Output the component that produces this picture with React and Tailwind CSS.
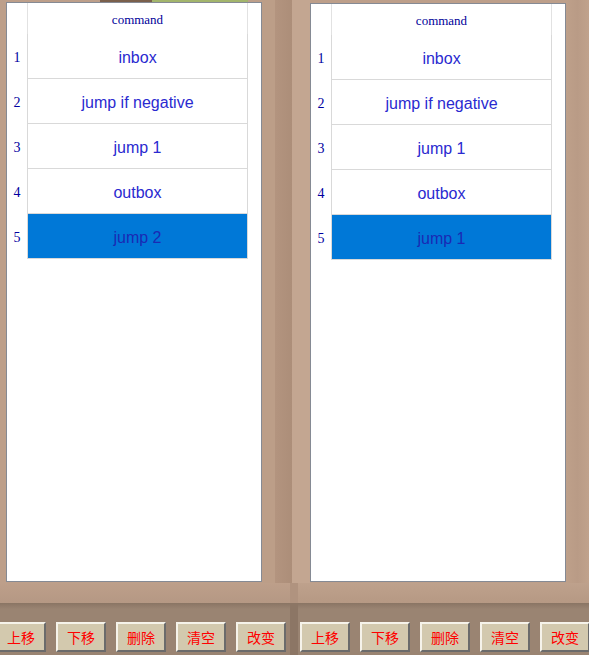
import React from 'react';

const left = ['inbox', 'jump if negative', 'jump 1', 'outbox', 'jump 2'];
const right = ['inbox', 'jump if negative', 'jump 1', 'outbox', 'jump 1'];
const buttons = ['上移', '下移', '删除', '清空', '改变'];

function Program({ rows, selected }) {
  return (
    <div className="w-[256px] h-full bg-white border border-[#858a94] flex flex-col">
      {/* header row */}
      <div className="flex h-[31px]">
        <div className="w-[20px]" />
        <div className="w-[221px] pt-[2px] border-l border-r border-[#e2e2e2] flex items-center justify-center font-['Liberation_Serif',serif] text-[13px] text-[#000099]">
          command
        </div>
      </div>
      {rows.map((cmd, i) => (
        <div key={i} className="flex h-[45px]">
          <div className="w-[20px] pt-[2px] flex items-center justify-center font-['Liberation_Serif',serif] text-[14px] text-[#0000a0]">
            {i + 1}
          </div>
          <div
            className={`w-[221px] pt-[3px] border-l border-r border-b border-[#d9d9d9] flex items-center justify-center font-['Liberation_Sans',sans-serif] text-[16px] ${
              i === selected ? 'bg-[#0078d7] text-[#1a2ab4]' : 'bg-white text-[#2a2ad0]'
            }`}
          >
            {cmd}
          </div>
        </div>
      ))}
    </div>
  );
}

function ButtonBar({ className }) {
  return (
    <div className={`flex gap-[10px] ${className}`}>
      {buttons.map((b) => (
        <button
          key={b}
          className="w-[50px] h-[30px] shrink-0 bg-[#d3c9ae] border-t-2 border-l-2 border-b-2 border-r-2 border-t-[#f6f3ea] border-l-[#f6f3ea] border-b-[#6b6b6b] border-r-[#6b6b6b] flex items-center justify-center font-['Noto_Sans_CJK_SC',sans-serif] text-[14px] text-[#ff0000]"
        >
          {b}
        </button>
      ))}
    </div>
  );
}

export default function App() {
  return (
    <div className="w-[589px] h-[655px] overflow-hidden bg-[#bd9f8a] flex flex-col">
      {/* upper area with two program panels */}
      <div className="flex h-[583px]">
        <div className="w-[262px] flex flex-col">
          <div className="h-[2px] flex">
            <div className="w-[100px] bg-[#bd9f8a]" />
            <div className="w-[52px] bg-[#7a604c]" />
            <div className="w-[96px] bg-[#a3b56c]" />
          </div>
          <div className="flex-1 pl-[6px] pb-[1px]">
            <Program rows={left} selected={4} />
          </div>
        </div>
        <div className="w-[13px] bg-[#bc9e88]" />
        <div className="w-[17px] bg-gradient-to-r from-[#b3947f] to-[#ac8e79]" />
        <div className="w-[18px] bg-[#c3a691]" />
        <div className="w-[256px] pt-[3px] pb-[1px]">
          <Program rows={right} selected={4} />
        </div>
        <div className="flex-1 bg-gradient-to-r from-[#bea08a] via-[#b99b86] to-[#c0a28c]" />
      </div>

      {/* brown gap under panels */}
      <div className="h-[20px] flex">
        <div className="w-[290px] bg-gradient-to-b from-[#bd9f8a] to-[#b59884]" />
        <div className="w-[8px] bg-[#b0937f]" />
        <div className="flex-1 bg-gradient-to-b from-[#bea18c] to-[#b69984]" />
      </div>

      {/* bottom button bar */}
      <div className="flex-1 flex bg-[#9a8472]">
        <div className="w-[290px] flex flex-col overflow-hidden">
          <div className="h-[6px] bg-gradient-to-b from-[#8a7564] to-[#9a8472]" />
          <ButtonBar className="ml-[-4px] mt-[13px]" />
        </div>
        <div className="w-[8px] bg-[#8c7665]" />
        <div className="flex-1 flex flex-col overflow-hidden">
          <div className="h-[6px] bg-gradient-to-b from-[#8a7564] to-[#9a8472]" />
          <ButtonBar className="ml-[2px] mt-[13px]" />
        </div>
      </div>
    </div>
  );
}
